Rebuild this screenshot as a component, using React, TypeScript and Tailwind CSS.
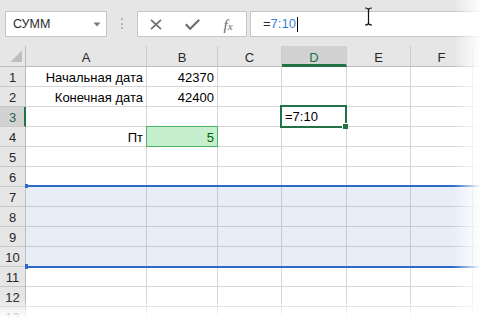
import React from 'react';

type Col = { key: string; w: string };
const cols: Col[] = [
  { key: 'A', w: 'w-[121px]' },
  { key: 'B', w: 'w-[71px]' },
  { key: 'C', w: 'w-[64px]' },
  { key: 'D', w: 'w-[65px]' },
  { key: 'E', w: 'w-[64px]' },
  { key: 'F', w: 'w-[62px]' },
];

const data: Record<number, Record<string, string>> = {
  1: { A: 'Начальная дата', B: '42370' },
  2: { A: 'Конечная дата', B: '42400' },
  4: { A: 'Пт', B: '5' },
};

function Toolbar() {
  return (
    <div className="flex h-[46px] items-start bg-[#e6e6e6] pt-[11px] pl-[5px]">
      <div className="flex h-[26px] w-[102px] items-center border border-[#c6c6c6] bg-white pl-[7px] text-[12.5px] leading-[16px] text-[#2a2a2a]">
        <span className="flex-1">СУММ</span>
        <svg width="8" height="5" viewBox="0 0 8 5" className="mr-[5px]">
          <path d="M0.5 0.5 L7.5 0.5 L4 4.5 Z" fill="#7a7a7a" />
        </svg>
      </div>
      <div className="flex h-[26px] w-[30px] flex-col items-center justify-center gap-[2.5px] pb-[1px]">
        <div className="h-[2px] w-[2px] bg-[#b4b4b4]" />
        <div className="h-[2px] w-[2px] bg-[#b4b4b4]" />
        <div className="h-[2px] w-[2px] bg-[#b4b4b4]" />
      </div>
      <div className="flex h-[26px] w-[110px] items-center border border-[#c6c6c6] bg-white">
        <div className="flex h-full w-[36px] items-center justify-center pt-[1px]">
          <svg width="12" height="11" viewBox="0 0 12 11">
            <path d="M1 0.8 L11 10.2 M11 0.8 L1 10.2" stroke="#6d6d6d" strokeWidth="1.7" fill="none" />
          </svg>
        </div>
        <div className="flex h-full w-[36px] items-center justify-center pt-[1px]">
          <svg width="15" height="11" viewBox="0 0 15 11">
            <path d="M0.8 5.2 L5.2 9.8 L14.2 0.8" stroke="#6d6d6d" strokeWidth="2.1" fill="none" />
          </svg>
        </div>
        <div className="flex h-full w-[36px] items-center justify-center pt-[1px] font-['Liberation_Serif',serif] italic text-[#6a6a6a]">
          <span className="text-[15px] leading-[16px]">f</span>
          <span className="mt-[3px] text-[11px] leading-[12px]">x</span>
        </div>
      </div>
      <div className="ml-[3px] flex h-[26px] flex-1 items-center border border-[#c6c6c6] bg-white pl-[12px] text-[13px] leading-[16px]">
        <span className="text-[#2a2a2a]">=</span>
        <span className="text-[#3b7fe0]">7:10</span>
        <span className="ml-[1px] inline-block h-[15px] w-px bg-black" />
      </div>
    </div>
  );
}

function HeaderRow() {
  return (
    <div className="flex h-[21px] bg-[#e6e6e6]">
      <div className="relative h-[21px] w-[26px] border-r border-b border-[#bcbcbc]">
        <svg width="13" height="13" viewBox="0 0 13 13" className="absolute left-[10px] top-[4px]">
          <path d="M12 0.5 L12 12 L0.5 12 Z" fill="#bdbdbd" />
        </svg>
      </div>
      {cols.map((c) => {
        const sel = c.key === 'D';
        return (
          <div
            key={c.key}
            className={`${c.w} flex h-[21px] items-end justify-center border-r border-r-[#cacaca] text-[13px] leading-[16px] ${
              sel
                ? 'border-b-[3px] border-b-[#217346] bg-[#d2d2d2] text-[#217346]'
                : 'border-b border-b-[#bcbcbc] text-[#262626]'
            }`}
          >
            <span className={sel ? 'mb-[-2px]' : ''}>{c.key}</span>
          </div>
        );
      })}
      <div className="h-[21px] flex-1 border-b border-[#bcbcbc]" />
    </div>
  );
}

function Row({ n }: { n: number }) {
  const inRange = n >= 7 && n <= 10;
  const rowSel = n === 3;
  const cells = data[n] || {};
  const grid = inRange ? 'border-[#c4c9d2] bg-[#e8eef8]' : 'border-[#d6d6d6] bg-white';
  return (
    <div className="flex h-[20px]">
      <div
        className={`flex h-[20px] w-[26px] items-end justify-center border-b border-b-[#c8c8c8] text-[13px] leading-[16px] ${
          rowSel
            ? 'border-r-2 border-r-[#217346] bg-[#d2d2d2] pl-[1px] text-[#2d6048]'
            : 'border-r border-r-[#bcbcbc] bg-[#e6e6e6] text-[#262626]'
        }`}
      >
        {n}
      </div>
      {cols.map((c) => {
        const txt = cells[c.key];
        const good = n === 4 && c.key === 'B';
        return (
          <div
            key={c.key}
            className={`${c.w} flex h-[20px] items-end justify-end overflow-hidden whitespace-nowrap border-r border-b pr-[3px] font-['Liberation_Sans',Arial,sans-serif] text-[13px] leading-[16px] ${
              good ? 'border-[#d6d6d6] bg-[#c6efce] text-[#006100]' : grid + ' text-black'
            }`}
          >
            {txt}
          </div>
        );
      })}
      <div className={`h-[20px] flex-1 border-b ${grid}`} />
    </div>
  );
}

export default function App() {
  const rows = Array.from({ length: 13 }, (_, i) => i + 1);
  return (
    <div className="relative h-[318px] w-[481px] overflow-hidden bg-white font-['Liberation_Sans',Arial,sans-serif]">
      <Toolbar />
      <HeaderRow />
      {rows.map((n) => (
        <Row key={n} n={n} />
      ))}

      {/* B4 good-style border */}
      <div className="pointer-events-none absolute left-[146px] top-[126px] h-[21px] w-[72px] border border-[#4fb266]" />

      {/* D3 active cell */}
      <div className="absolute left-[280px] top-[105px] flex h-[23px] w-[67px] items-end border-2 border-[#217346] pl-[3px] text-[13px] leading-[16px] text-black">
        <span className="mb-[1px]">=7:10</span>
        <div className="absolute bottom-[-3px] right-[-3px] h-[6px] w-[6px] border-l border-t border-white bg-[#217346]" />
      </div>

      {/* referenced range 7:10 */}
      <div className="pointer-events-none absolute left-[26px] right-0 top-[185px] h-[83px] border-y-2 border-[#2e6bc6]" />
      <div className="absolute left-[25px] top-[184px] h-[4px] w-[3px] bg-[#2e6bc6]" />
      <div className="absolute left-[25px] top-[264px] h-[5px] w-[3px] bg-[#2e6bc6]" />

      {/* I-beam mouse cursor */}
      <svg width="9" height="19" viewBox="0 0 9 19" className="absolute left-[364px] top-[7px]">
        <path
          d="M1 1 Q4.5 1 4.5 3 Q4.5 1 8 1 M4.5 3 V16 M1 18 Q4.5 18 4.5 16 Q4.5 18 8 18"
          stroke="#111"
          strokeWidth="1.2"
          fill="none"
        />
      </svg>

      {/* fades */}
      <div className="pointer-events-none absolute right-0 top-0 h-full w-[28px] bg-linear-to-r from-white/0 to-white" />
      <div className="pointer-events-none absolute bottom-0 left-0 h-[18px] w-full bg-linear-to-b from-white/0 to-white" />
    </div>
  );
}
